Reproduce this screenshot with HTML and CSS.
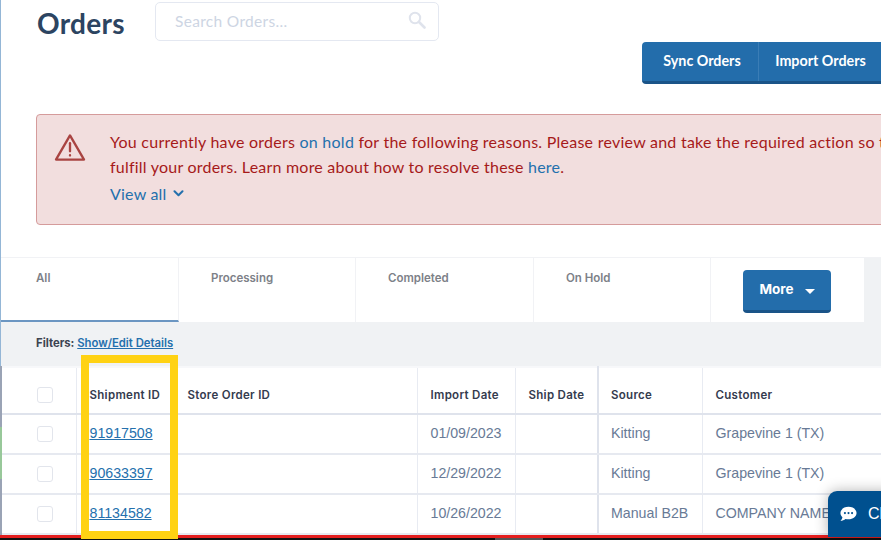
FILE: index.html
```html
<!DOCTYPE html>
<html lang="en">
<head>
<meta charset="utf-8">
<title>Orders</title>
<link rel="stylesheet" href="styles.css">
</head>
<body>
<div class="app">
  <main class="page">
    <header class="top">
      <h1 class="title">Orders</h1>
      <div class="search">
        <span class="search-text">Search Orders...</span>
        <svg class="search-icon" width="18" height="18" viewBox="0 0 18 18" fill="none" stroke="#dfe3ec" stroke-width="2"><circle cx="7" cy="7" r="5.2"/><path d="M11 11l5.5 5.5" stroke-linecap="round" stroke-width="2.6"/></svg>
      </div>
    </header>
    <div class="actions">
      <div class="btn-group">
        <button class="btn btn-sync">Sync Orders</button>
        <button class="btn btn-import">Import Orders</button>
      </div>
    </div>
    <section class="alert">
      <svg class="alert-icon" width="32" height="29" viewBox="0 0 33 30" fill="none" stroke="#a94442" stroke-width="2.400" stroke-linejoin="round" stroke-linecap="round"><path d="M16.500 2.500L31 27.500H2z"/><path d="M16.500 10.500v8.500"/><path d="M16.500 23v.4"/></svg>
      <div class="alert-body">
        <p class="alert-line">You currently have orders <a class="link">on hold</a> for the following reasons. Please review and take the required action so that we can</p>
        <p class="alert-line alert-line-tight">fulfill your orders. Learn more about how to resolve these <a class="link">here</a>.</p>
        <p class="alert-more"><a class="link">View all</a>
          <svg class="chev" width="11" height="7" viewBox="0 0 11 7" fill="none" stroke="#2470ad" stroke-width="2" stroke-linecap="round" stroke-linejoin="round"><path d="M1.500 1.200l4 4 4-4"/></svg>
        </p>
      </div>
    </section>
    <nav class="tabs">
      <div class="tab tab-active">All</div>
      <div class="tab">Processing</div>
      <div class="tab tab-wide">Completed</div>
      <div class="tab">On Hold</div>
      <div class="tab-more">
        <button class="more-btn">More <span class="caret"></span></button>
      </div>
    </nav>
    <div class="filters"><b class="filters-label">Filters:</b> <a class="filters-link">Show/Edit Details</a></div>
    <table class="orders">
      <colgroup>
        <col class="c-check"><col class="c-ship"><col class="c-store"><col class="c-import"><col class="c-shipdate"><col class="c-source"><col class="c-customer">
      </colgroup>
      <thead>
        <tr>
          <th class="cell-check"><span class="box"></span></th>
          <th>Shipment ID</th><th>Store Order ID</th><th>Import Date</th><th>Ship Date</th><th>Source</th><th>Customer</th>
        </tr>
      </thead>
      <tbody>
        <tr>
          <td class="cell-check"><span class="box"></span></td>
          <td><a class="id">91917508</a></td><td></td><td>01/09/2023</td><td></td><td>Kitting</td><td>Grapevine 1 (TX)</td>
        </tr>
        <tr>
          <td class="cell-check"><span class="box"></span></td>
          <td><a class="id">90633397</a></td><td></td><td>12/29/2022</td><td></td><td>Kitting</td><td>Grapevine 1 (TX)</td>
        </tr>
        <tr>
          <td class="cell-check"><span class="box"></span></td>
          <td><a class="id">81134582</a></td><td></td><td>10/26/2022</td><td></td><td>Manual B2B</td><td>COMPANY NAME</td>
        </tr>
      </tbody>
    </table>
  </main>
  <div class="strip"><span class="thumb"></span></div>
  <div class="edge"><span class="edge-green"></span></div>
  <div class="highlight"></div>
  <div class="chat">
    <svg width="17" height="16" viewBox="0 0 19 17"><path fill="#fff" d="M9.500 0.500C4.500 0.500 0.500 3.500 0.500 7.500c0 1.800.8 3.400 2.200 4.600-.2 1.500-1 2.900-2.200 3.900 2.200 0 4.200-.8 5.600-2 1.100.3 2.200.5 3.400.5 5 0 9-3 9-7s-4-7-9-7z"/><circle cx="5.500" cy="7.500" r="1.200" fill="#00508f"/><circle cx="9.500" cy="7.500" r="1.200" fill="#00508f"/><circle cx="13.500" cy="7.500" r="1.200" fill="#00508f"/></svg>
    <span class="chat-text">Chat</span>
  </div>
</div>
</body>
</html>
```
FILE: styles.css
```css
* { box-sizing: border-box; }
html, body { margin: 0; padding: 0; height: 540px; overflow: hidden; background: #fff; }
body { font-family: "Lato", "Liberation Sans", sans-serif; }

.app { position: relative; width: 881px; height: 540px; overflow: hidden; display: flex; flex-direction: column; }
.page { flex: 1; min-height: 0; border-left: 1px solid #94b6d6; display: flex; flex-direction: column; overflow: hidden; }

.top { display: flex; align-items: flex-start; height: 42px; padding: 2px 0 0 36px; flex: none; }
.title { margin: 4px 0 0; width: 118px; font-size: 28px; line-height: 34px; font-weight: 700; color: #2c4461; letter-spacing: .3px; }
.search { width: 284px; height: 39px; border: 1px solid #e4e8f1; border-radius: 5px; display: flex; align-items: center; justify-content: space-between; padding: 0 12px 2px 19px; }
.search-text { font-size: 15.500px; color: #cdd5e3; letter-spacing: .32px; }
.search-icon { margin-top: -1px; }

.actions { flex: none; height: 72px; padding-left: 641px; }
.btn-group { display: flex; width: 260px; height: 42px; background: #236dab; border-bottom: 3px solid #1a5488; border-radius: 4px 0 0 4px; }
.btn { border: 0; background: none; color: #fff; font: 700 14.300px "Lato", sans-serif; padding: 0 0 2px; height: 39px; }
.btn-sync { width: 117px; padding-left: 4px; border-right: 1px solid #3a7db6; }
.btn-import { width: 123px; }

.alert { flex: none; margin-left: 35px; width: 900px; height: 111px; background: #f2dede; border: 1px solid #d59b9b; border-radius: 4px; display: flex; padding: 15px 0 0 17px; }
.alert-icon { flex: none; margin-top: 3px; }
.alert-body { margin-left: 24px; white-space: nowrap; }
.alert-line { margin: 0; font-size: 16px; line-height: 24px; color: #a61a1a; letter-spacing: .25px; }
.alert-line-tight { margin-top: 1px; letter-spacing: .22px; }
.alert-more { margin: 3px 0 0; font-size: 16px; line-height: 24px; letter-spacing: .2px; display: flex; align-items: center; gap: 7px; }
.link { color: #2470ad; }
.chev { margin-top: -2px; }

.tabs { flex: none; margin-top: 32px; height: 65px; display: flex; background: #f0f2f4; border-top: 1px solid #f1f2f5; }
.tab { width: 177px; background: #fff; border-right: 1px solid #f1f2f5; padding: 13px 0 0 32px; font: 600 11.500px/14px "Inter", "Liberation Sans", sans-serif; color: #7d8188; }
.tab-active { width: 178px; padding-left: 35px; border-bottom: 2px solid #6b96c2; }
.tab-wide { width: 178px; }
.tab-more { width: 153px; background: #fff; padding: 12px 0 0 32px; }
.more-btn { width: 88px; height: 43px; background: #236dab; border: 0; border-bottom: 3px solid #1a5488; border-radius: 4px; color: #fff; font: 700 13.500px "Inter", "Liberation Sans", sans-serif; padding: 0 0 2px; display: flex; align-items: center; justify-content: center; gap: 11px; }
.caret { width: 0; height: 0; margin-top: 4px; border-left: 5px solid transparent; border-right: 5px solid transparent; border-top: 5px solid #fff; }

.filters { flex: none; height: 44px; background: #f0f2f4; padding: 14px 0 0 35px; font: 600 11.300px/14px "Inter", "Liberation Sans", sans-serif; color: #3c4350; }
.filters-label { font-weight: 700; }
.filters-link { color: #2470ad; text-decoration: underline; }

.orders { flex: none; border-collapse: collapse; table-layout: fixed; width: 1000px; background: #fff; }
.c-check { width: 75px; }
.c-ship { width: 98px; }
.c-store { width: 243px; }
.c-import { width: 98px; }
.c-shipdate { width: 83px; }
.c-source { width: 104px; }
.c-customer { width: 299px; }
.orders th { height: 47px; padding: 9px 0 0 13px; text-align: left; font: 600 11.500px/14px "Inter", "Liberation Sans", sans-serif; color: #343b4e; letter-spacing: .3px; border-right: 1px solid #e8ebf2; border-bottom: 2px solid #dfe3ec; border-top: 2px solid #f7f8fa; }
.orders td { height: 40px; padding: 0 0 2px 13px; font: 14.200px/18px "Liberation Sans", sans-serif; color: #687a96; border-right: 1px solid #e8ebf2; border-bottom: 2px solid #e6e9f0; white-space: nowrap; }
.orders th:nth-child(6), .orders td:nth-child(6) { padding-left: 12px; }
.orders th.cell-check, .orders td.cell-check { padding: 0 0 0 36px; }
.orders th.cell-check { padding-top: 9px; }
.orders th:nth-child(5), .orders td:nth-child(5) { border-right: 2px solid #dfe3ec; }
.box { display: block; width: 16px; height: 16px; border: 1px solid #e2e5ec; border-radius: 3px; background: #fff; }
.id { color: #2470ad; text-decoration: underline; font-size: 14.200px; }

.edge { position: absolute; left: 0; top: 366px; width: 2px; height: 169px; background: #9aa3b5; }
.edge-green { position: absolute; left: 0; top: 61px; width: 2px; height: 52px; background: #98c89a; }

.highlight { position: absolute; left: 81px; top: 355px; width: 97px; height: 184px; border: 8px solid #ffd213; }

.chat { position: absolute; left: 828px; top: 491px; width: 120px; height: 46px; background: #00508f; border-radius: 9px 0 0 0; box-shadow: 0 0 14px rgba(0,0,0,.3); display: flex; align-items: center; padding-left: 12px; gap: 11px; color: #fff; }
.chat-text { font: 16px "Liberation Sans", sans-serif; }

.strip { flex: none; height: 5px; background: #111; border-top: 3px solid #e41e1e; position: relative; }
.thumb { position: absolute; left: 495px; top: 0; width: 48px; height: 2px; background: #555; }
```
